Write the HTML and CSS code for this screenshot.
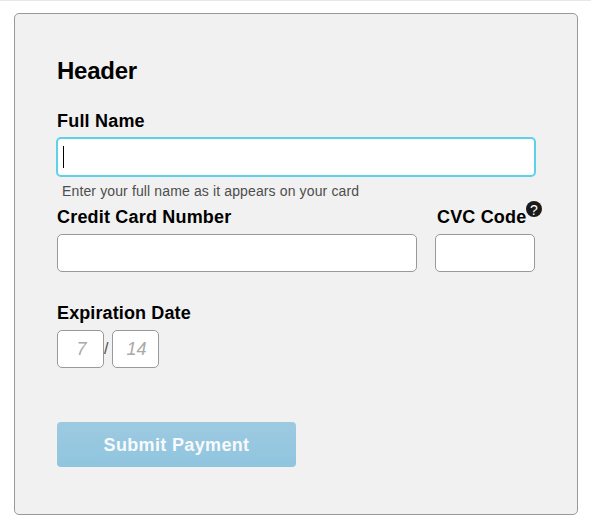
FILE: index.html
```html
<!DOCTYPE html>
<html lang="en">
<head>
<meta charset="utf-8">
<title>Payment</title>
<link rel="stylesheet" href="styles.css">
</head>
<body>
<form class="card">
  <h1 class="title">Header</h1>
  <div class="field">
    <div class="label"><span class="name-label">Full Name</span></div>
    <div class="input focused"><span class="caret"></span></div>
    <div class="hint">Enter your full name as it appears on your card</div>
  </div>
  <div class="row">
    <div class="field number">
      <div class="label"><span class="number-label">Credit Card Number</span></div>
      <div class="input"></div>
    </div>
    <div class="field cvc">
      <div class="label"><span class="cvc-label">CVC Code</span><span class="help">?</span></div>
      <div class="input"></div>
    </div>
  </div>
  <div class="field expiry">
    <div class="label"><span class="expiry-label">Expiration Date</span></div>
    <div class="dates">
      <div class="input date">7</div>
      <span class="slash">/</span>
      <div class="input date">14</div>
    </div>
  </div>
  <button class="submit" type="button">Submit Payment</button>
</form>
</body>
</html>
```
FILE: styles.css
```css
* { box-sizing: border-box; }
body {
  margin: 0;
  height: 529px;
  overflow: hidden;
  border-top: 1px solid #e7e7e7;
  background: #fff;
  color: #000;
  font-family: "Liberation Sans", Arial, sans-serif;
}
.card {
  width: 564px;
  height: 502px;
  margin: 12px 0 0 14px;
  padding: 43px 42px 0;
  border: 1px solid #999;
  border-radius: 5px;
  background: #f1f1f1;
}
.title {
  margin: 0 0 26px;
  font-size: 24px;
  line-height: 28px;
  letter-spacing: -0.25px;
}
.label {
  position: relative;
  height: 20px;
  margin-bottom: 7px;
  font-size: 18px;
  font-weight: bold;
  line-height: 20px;
  white-space: nowrap;
}
.name-label { letter-spacing: 0.2px; }
.number-label { letter-spacing: 0.19px; }
.cvc-label {
  margin-left: 2px;
  letter-spacing: 0.17px;
}
.expiry-label { letter-spacing: 0.12px; }
.input {
  height: 38px;
  border: 1px solid #999;
  border-radius: 5px;
  background: #fff;
}
.focused {
  display: flex;
  align-items: center;
  width: 480px;
  height: 40px;
  margin: -1px 0 0 -1px;
  padding-left: 5px;
  border: 2px solid #5bd1ea;
}
.caret {
  width: 1px;
  height: 22px;
  background: #000;
}
.hint {
  margin: 5px 0 7px 5px;
  color: #4d4d4d;
  font-size: 14px;
  line-height: 18px;
  letter-spacing: 0.13px;
  white-space: nowrap;
}
.row {
  display: flex;
  gap: 18px;
}
.number { width: 360px; }
.cvc { width: 100px; }
.help {
  position: absolute;
  top: -6px;
  left: 91px;
  width: 16px;
  height: 16px;
  border-radius: 50%;
  background: #1a1a1a;
  color: #fff;
  font-size: 14px;
  font-weight: normal;
  line-height: 18px;
  text-align: center;
}
.expiry { margin-top: 31px; }
.dates {
  display: flex;
  align-items: center;
}
.date {
  width: 47px;
  padding-left: 2px;
  color: #a9a9a9;
  font-size: 18px;
  font-style: italic;
  line-height: 36px;
  text-align: center;
}
.slash {
  width: 8px;
  color: #4d4d4d;
  font-size: 16px;
}
.submit {
  display: block;
  width: 239px;
  height: 45px;
  margin-top: 54px;
  padding: 1px 0 0;
  border: 0;
  border-radius: 4px;
  background: linear-gradient(#9dcae1, #90c5df);
  color: #f7f9fb;
  font: bold 18px/44px "Liberation Sans", Arial, sans-serif;
  letter-spacing: 0.35px;
}
```
